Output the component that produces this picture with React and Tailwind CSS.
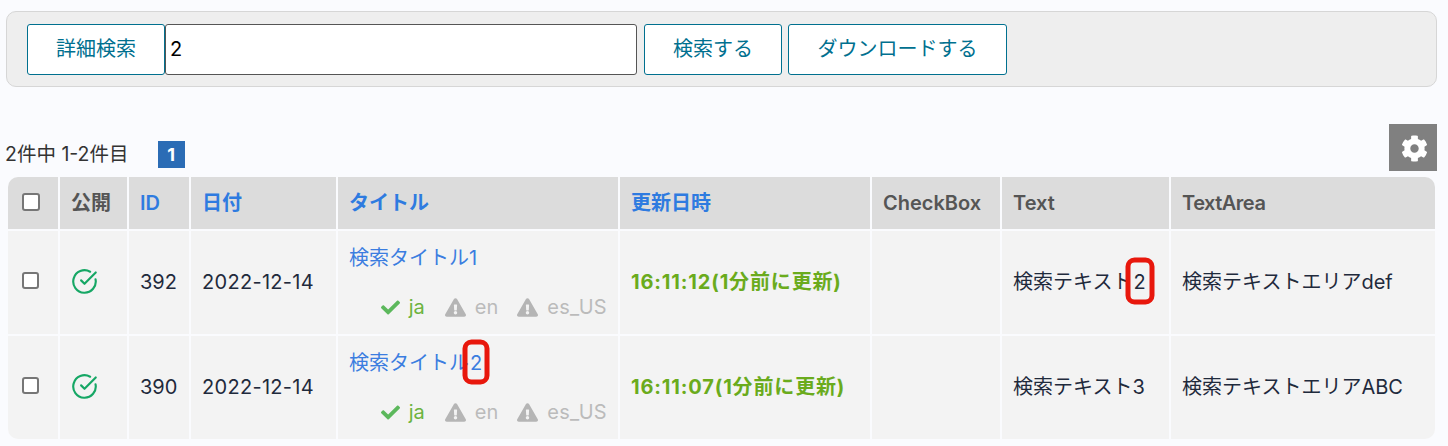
import { CircleCheckBig } from 'lucide-react';
import { FaCheck, FaCog, FaExclamationTriangle } from 'react-icons/fa';

const FONT = "font-['Inter','Noto_Sans_CJK_JP',sans-serif]";

function Mark({ children, className }) {
  return (
    <span className="relative ml-px inline-block">
      {children}
      <span className={`absolute left-1/2 -translate-x-1/2 -translate-y-1/2 rounded-[9px] border-[5px] border-[#e8170c] ${className}`} />
    </span>
  );
}

function Lang({ ok, label, className }) {
  return (
    <span className={`flex items-center gap-[9px] ${ok ? 'text-[#6cb33f]' : 'text-[#bbbbbb]'} ${className}`}>
      {ok ? <FaCheck size={19} className="text-[#5cb85c]" /> : <FaExclamationTriangle size={21} className="text-[#b5b5b5]" />}
      {label}
    </span>
  );
}

function OutlineButton({ className, children }) {
  return (
    <button className={`h-[51px] rounded-[3px] border border-[#00708f] bg-white text-center text-[20px] text-[#00708f] ${className}`}>
      {children}
    </button>
  );
}

const rows = [
  {
    id: '392',
    title: '検索タイトル1',
    time: '16:11:12(1分前に更新)',
    text: <>検索テキスト<Mark className="top-[calc(50%-1px)] h-[47px] w-[29px]">2</Mark></>,
    area: '検索テキストエリアdef',
  },
  {
    id: '390',
    title: <>検索タイトル<Mark className="top-[calc(50%-2px)] h-[45px] w-[27px]">2</Mark></>,
    time: '16:11:07(1分前に更新)',
    text: '検索テキスト3',
    area: '検索テキストエリアABC',
  },
];

export default function App() {
  const th = 'bg-[#dcdcdc] pl-[11px] text-left text-[20px] font-semibold';
  const td = 'bg-[#f3f3f3] pb-[2px] pl-[11px] align-middle text-[20px] text-[#1f2a3c]';
  return (
    <div className={`h-[446px] w-[1448px] overflow-hidden bg-[#fafbfe] pl-[6px] pr-[11px] pt-[11px] ${FONT}`}>
      <div className="flex h-[76px] items-center rounded-[10px] border border-[#d6d6d6] bg-[#eeeeee] pl-5">
        <OutlineButton className="w-[138px]">詳細検索</OutlineButton>
        <input
          readOnly
          value="2"
          className="h-[51px] w-[472px] rounded-[3px] border border-[#555555] bg-white px-1 text-[20px] text-black outline-none"
        />
        <OutlineButton className="ml-[7px] w-[138px]">検索する</OutlineButton>
        <OutlineButton className="ml-[6px] w-[219px]">ダウンロードする</OutlineButton>
      </div>

      <div className="mt-[37px] flex h-[47px] items-end justify-between">
        <div className="mb-[3px] flex items-center">
          <span className="-ml-px text-[19.5px] leading-[27px] text-[#333333]">2件中 1-2件目</span>
          <span className="ml-[29px] flex h-[27px] w-[27px] items-center justify-center bg-[#2b6cb5] text-[18px] font-bold text-white">1</span>
        </div>
        <button className="flex h-[47px] w-[48px] items-center justify-center bg-[#808080] pl-[2px] pt-[2px]">
          <FaCog size={27} className="text-white" />
        </button>
      </div>

      <table className="mt-1 w-[1431px] table-fixed border-separate border-spacing-[2px]">
        <colgroup>
          <col className="w-[50px]" />
          <col className="w-[67px]" />
          <col className="w-[60px]" />
          <col className="w-[145px]" />
          <col className="w-[280px]" />
          <col className="w-[250px]" />
          <col className="w-[128px]" />
          <col className="w-[167px]" />
          <col />
        </colgroup>
        <thead>
          <tr className="h-[52px]">
            <th className={`${th} rounded-tl-[10px] !pl-[14px]`}>
              <input type="checkbox" className="mb-[2px] block h-[18px] w-[18px] appearance-none rounded-[3px] border-2 border-[#767676] bg-white" />
            </th>
            <th className={`${th} text-[#555555]`}>公開</th>
            <th className={`${th} text-[#2e7be0]`}>ID</th>
            <th className={`${th} text-[#2e7be0]`}>日付</th>
            <th className={`${th} text-[#2e7be0]`}>タイトル</th>
            <th className={`${th} text-[#2e7be0]`}>更新日時</th>
            <th className={`${th} text-[#555555]`}>CheckBox</th>
            <th className={`${th} text-[#555555]`}>Text</th>
            <th className={`${th} rounded-tr-[10px] tracking-[-0.5px] text-[#555555]`}>TextArea</th>
          </tr>
        </thead>
        <tbody>
          {rows.map((row, i) => (
            <tr key={row.id} className="h-[103px]">
              <td className={`${td} !pl-[14px] !pb-[4px] ${i === 1 ? 'rounded-bl-[10px]' : ''}`}>
                <input type="checkbox" className="block h-[17px] w-[17px] appearance-none rounded-[3px] border-2 border-[#767676] bg-white" />
              </td>
              <td className={td}><CircleCheckBig size={27} strokeWidth={1.9} className="text-[#16a765]" /></td>
              <td className={td}>{row.id}</td>
              <td className={`${td} tracking-[0.3px]`}>2022-12-14</td>
              <td className={`${td} !pb-0 align-top`}>
                <div className="flex h-[103px] flex-col justify-between py-[14px]">
                  <a className="leading-[27px] text-[#3b7de0]">{row.title}</a>
                  <div className="flex justify-end pr-[11px] leading-[26px]">
                    <Lang ok label="ja" />
                    <Lang label="en" className="ml-5" />
                    <Lang label="es_US" className="ml-[19px] tracking-[0.3px]" />
                  </div>
                </div>
              </td>
              <td className={`${td} font-bold tracking-[0.85px] text-[#6aab1c]`}>{row.time}</td>
              <td className={td} />
              <td className={td}>{row.text}</td>
              <td className={`${td} ${i === 1 ? 'rounded-br-[10px]' : ''}`}>{row.area}</td>
            </tr>
          ))}
        </tbody>
      </table>
    </div>
  );
}
